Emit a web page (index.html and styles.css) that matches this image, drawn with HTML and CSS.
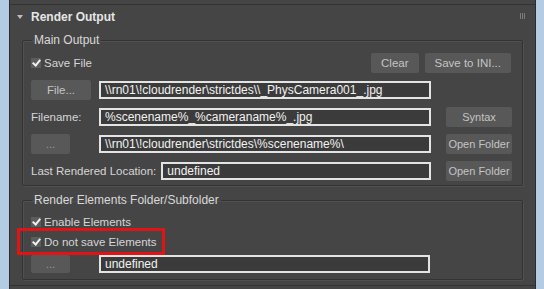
FILE: index.html
```html
<!DOCTYPE html>
<html lang="en">
<head>
    <meta charset="UTF-8">
    <title>Render Output</title>
    <link rel="stylesheet" href="styles.css">
</head>
<body>
    <div class="frame">
        <div class="rollout">
            <div class="rollout-head">
                <span class="arrow"></span>
                <span class="title">Render Output</span>
                <span class="grip"><i></i><i></i><i></i></span>
            </div>

            <fieldset class="group">
                <legend>Main Output</legend>
                <div class="row top-row">
                    <label class="check"><span class="box"></span>Save File</label>
                    <div class="btns">
                        <button class="btn">Clear</button>
                        <button class="btn">Save to INI...</button>
                    </div>
                </div>
                <div class="grid">
                    <button class="btn wide">File...</button>
                    <div class="field">\\rn01\!cloudrender\strictdes\\_PhysCamera001_.jpg</div>
                    <span></span>

                    <span class="label">Filename:</span>
                    <div class="field">%scenename%_%cameraname%_.jpg</div>
                    <button class="btn side">Syntax</button>

                    <button class="btn dots">...</button>
                    <div class="field">\\rn01\!cloudrender\strictdes\%scenename%\</div>
                    <button class="btn side">Open Folder</button>

                    <div class="span2">
                        <span class="label">Last Rendered Location:</span>
                        <div class="field grow">undefined</div>
                    </div>
                    <button class="btn side">Open Folder</button>
                </div>
            </fieldset>

            <fieldset class="group elements">
                <legend>Render Elements Folder/Subfolder</legend>
                <label class="check line"><span class="box"></span>Enable Elements</label>
                <label class="check line"><span class="box"></span>Do not save Elements</label>
                <div class="row path-row">
                    <button class="btn dots">...</button>
                    <div class="field">undefined</div>
                </div>
            </fieldset>
        </div>
        <div class="highlight"></div>
    </div>
</body>
</html>
```
FILE: styles.css
```css
body {
    margin: 0;
    height: 289px;
    overflow: hidden;
    background: #b4cbe4;
    padding: 0 8px 0 9px;
    font-family: "Liberation Sans", Arial, sans-serif;
    font-size: 11px;
    color: #d6d6d6;
}
.frame {
    position: relative;
    background: #454545;
    border-left: 1px solid #2c2c2c;
    border-right: 1px solid #2c2c2c;
    height: 289px;
    padding-top: 4px;
    box-sizing: border-box;
}
.rollout {
    border-top: 1px solid #333;
    border-bottom: 1px solid #333;
    height: 282px;
    box-sizing: border-box;
}
.rollout-head {
    height: 24px;
    display: flex;
    align-items: center;
    position: relative;
}
.arrow {
    width: 0;
    height: 0;
    border-left: 3px solid transparent;
    border-right: 3px solid transparent;
    border-top: 4px solid #bdbdbd;
    margin: 0 8px 0 7px;
}
.title {
    font-size: 12px;
    font-weight: bold;
    color: #e6e6e6;
}
.grip {
    position: absolute;
    right: 10px;
    top: 8px;
    display: flex;
    gap: 1px;
}
.grip i {
    display: block;
    width: 1px;
    height: 6px;
    background: #7a7a7a;
}
.group {
    margin: 4px 12px 0 12px;
    padding: 6px 10px 4px 8px;
    border: 1px solid #333;
    border-radius: 2px;
    box-shadow: inset 1px 1px 0 #505050, 1px 1px 0 #505050;
}
.group legend {
    padding: 0 2px;
    margin-left: 1px;
    font-size: 12px;
    line-height: 14px;
    color: #d8d8d8;
}
.row {
    display: flex;
    align-items: center;
    height: 20px;
}
.top-row {
    justify-content: space-between;
    margin-bottom: 7px;
}
.btns {
    display: flex;
    gap: 6px;
    margin-right: 1px;
}
.btn {
    height: 20px;
    border: none;
    border-radius: 2px;
    background: #585858;
    color: #c4c4c4;
    font-family: inherit;
    font-size: 11.5px;
    padding: 0 10px;
    white-space: nowrap;
}
.check {
    display: flex;
    align-items: center;
    font-size: 11.5px;
}
.box {
    width: 10px;
    height: 10px;
    background: #5c5c5c;
    margin: 0 3px 0 0;
    position: relative;
}
.box::after {
    content: "";
    position: absolute;
    left: 3px;
    top: 0px;
    width: 3px;
    height: 6px;
    border: solid #f0f0f0;
    border-width: 0 2px 2px 0;
    transform: rotate(40deg);
}
.grid {
    display: grid;
    grid-template-columns: 68px 332px 1fr;
    row-gap: 7px;
    grid-auto-rows: 20px;
    align-items: center;
}
.side {
    width: 66px;
    padding: 0;
    font-size: 11px;
    justify-self: end;
}
.wide {
    width: 60px;
}
.dots {
    width: 39px;
    padding: 0;
    color: #9a9a9a;
}
.label {
    font-size: 11.5px;
    white-space: nowrap;
}
.field {
    height: 18px;
    box-sizing: border-box;
    border: 2px solid #e4e4e4;
    background: #3b3b3b;
    color: #f2f2f2;
    padding: 0 4px;
    font-size: 12px;
    line-height: 14px;
    white-space: nowrap;
    overflow: hidden;
}
.span2 {
    grid-column: span 2;
    display: flex;
    align-items: center;
    gap: 5px;
}
.grow {
    flex: 1;
}
.elements {
    margin-top: 7px;
    padding-top: 5px;
    padding-bottom: 6px;
}
.line {
    height: 20px;
}
.path-row {
    margin-top: 3px;
    height: 18px;
    gap: 29px;
}
.path-row .btn {
    height: 18px;
}
.path-row .field {
    width: 331px;
}
.highlight {
    position: absolute;
    left: 7px;
    top: 228px;
    width: 148px;
    height: 27px;
    box-sizing: border-box;
    border: 3px solid #e01414;
}
```
